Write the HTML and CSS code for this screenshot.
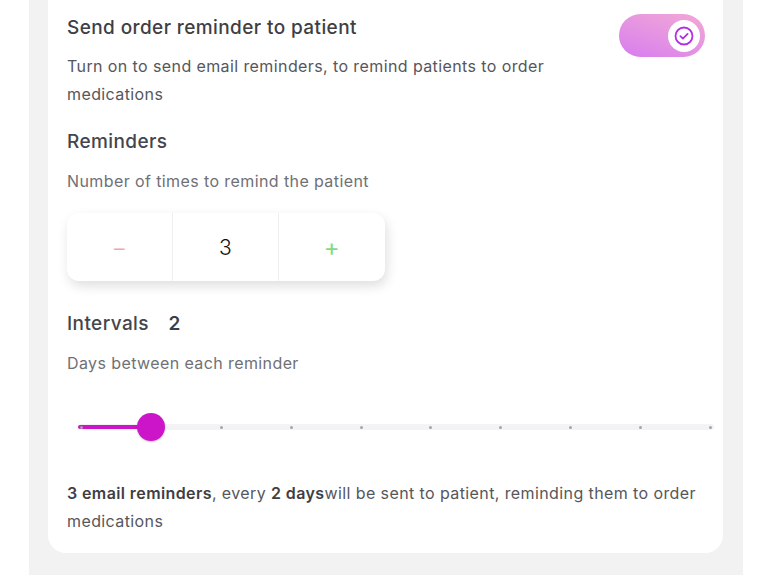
FILE: index.html
```html
<!DOCTYPE html>
<html lang="en">
<head>
<meta charset="utf-8">
<title>Order reminder</title>
<link rel="stylesheet" href="styles.css">
</head>
<body>
<div class="page">
  <div class="card">
    <div class="header-row">
      <div class="header-text">
        <h2 class="title">Send order reminder to patient</h2>
        <p class="desc">Turn on to send email reminders, to remind patients to order medications</p>
      </div>
      <div class="toggle">
        <span class="knob">
          <svg width="22" height="22" viewBox="0 0 22 22" aria-hidden="true">
            <circle cx="11" cy="11" r="8.5" fill="none" stroke="#b22fe2" stroke-width="1.8"/>
            <path d="M7.4 11.2 L9.9 13.6 L14.6 8.9" fill="none" stroke="#b22fe2" stroke-width="1.8" stroke-linecap="round" stroke-linejoin="round"/>
          </svg>
        </span>
      </div>
    </div>

    <h3 class="section">Reminders</h3>
    <p class="sub">Number of times to remind the patient</p>
    <div class="stepper">
      <div class="step-btn minus">&minus;</div>
      <div class="step-val">3</div>
      <div class="step-btn plus">+</div>
    </div>

    <h3 class="section intervals">Intervals <span class="int-val">2</span></h3>
    <p class="sub">Days between each reminder</p>
    <div class="slider">
      <div class="track">
        <span class="dot"></span><span class="dot"></span><span class="dot"></span><span class="dot"></span><span class="dot"></span>
        <span class="dot"></span><span class="dot"></span><span class="dot"></span><span class="dot"></span><span class="dot"></span>
        <div class="fill" style="width:73px"></div>
        <div class="thumb" style="left:73px"></div>
      </div>
    </div>

    <p class="summary"><b>3 email reminders</b>, every <b>2 days</b>will be sent to patient, reminding them to order medications</p>
  </div>
</div>
</body>
</html>
```

FILE: styles.css
```css
* { box-sizing: border-box; }
html, body { margin: 0; padding: 0; background: #ffffff; }
body {
  font-family: "Inter", "Noto Sans", "Liberation Sans", sans-serif;
  letter-spacing: 0.4px;
  width: 775px;
  height: 575px;
  overflow: hidden;
}
.page {
  margin-left: 29px;
  width: 714px;
  height: 575px;
  background: #f2f2f2;
  padding: 0 20px 22px 19px;
}
.card {
  background: #ffffff;
  border-radius: 0 0 18px 18px;
  padding: 15px 18px 19px 19px;
  height: 553px;
}
.header-row {
  display: flex;
  justify-content: space-between;
  align-items: flex-start;
}
.title {
  margin: 0;
  font-size: 19px;
  line-height: 26px;
  font-weight: 500;
  color: #3e3e45;
}
.toggle {
  width: 86px;
  height: 43px;
  margin-top: -1px;
  border-radius: 22px;
  background: linear-gradient(200deg, #f1a9d6 0%, #e594e2 50%, #d77cf0 100%);
  display: flex;
  align-items: center;
  justify-content: flex-end;
  padding-right: 5px;
}
.knob {
  width: 32px;
  height: 32px;
  border-radius: 50%;
  background: #ffffff;
  display: flex;
  align-items: center;
  justify-content: center;
}
.desc {
  margin: 11px 0 0;
  max-width: 540px;
  font-size: 16px;
  line-height: 28px;
  color: #56565c;
}
.section {
  margin: 21px 0 0;
  font-size: 19px;
  line-height: 26px;
  font-weight: 500;
  color: #45454b;
}
.sub {
  margin: 12px 0 0;
  font-size: 16px;
  line-height: 28px;
  color: #707075;
}
.stepper {
  margin-top: 18px;
  width: 318px;
  height: 68px;
  display: grid;
  grid-template-columns: 105px 107px 106px;
  background: #ffffff;
  border-radius: 12px;
  box-shadow: 2px 5px 12px rgba(0, 0, 0, 0.13);
  overflow: hidden;
}
.step-btn, .step-val {
  display: flex;
  align-items: center;
  justify-content: center;
}
.step-val {
  border-left: 1px solid #efefef;
  border-right: 1px solid #efefef;
  font-size: 21px;
  font-weight: 300;
  color: #111111;
}
.minus {
  color: #eeaaaa;
  font-size: 24px;
  font-weight: 300;
}
.plus {
  color: #7fdc82;
  font-size: 24px;
  font-weight: 400;
}
.intervals { margin-top: 30px; }
.int-val {
  margin-left: 14px;
  font-weight: 600;
  color: #3e3e45;
}
.slider {
  margin: 30px -9px 0 11px;
  height: 40px;
  display: flex;
  align-items: center;
}
.track {
  position: relative;
  flex: 1;
  height: 6px;
  border-radius: 3px;
  background: #f3f3f5;
  display: flex;
  align-items: center;
  justify-content: space-between;
  padding: 0 2px;
}
.dot {
  width: 3px;
  height: 3px;
  border-radius: 50%;
  background: #a4a4ae;
  position: relative;
  z-index: 1;
}
.fill {
  position: absolute;
  left: 0;
  top: 1px;
  height: 4px;
  border-radius: 2px;
  background: #cc15c9;
}
.thumb {
  position: absolute;
  top: 50%;
  width: 28px;
  height: 28px;
  margin: -14px 0 0 -14px;
  border-radius: 50%;
  background: #cc15c9;
  box-shadow: 0 1px 2px rgba(0, 0, 0, 0.2);
  z-index: 2;
}
.summary {
  margin: 32px 0 0;
  font-size: 16px;
  line-height: 28px;
  color: #56565c;
}
.summary b {
  font-weight: 600;
  color: #3e3e45;
}
```
